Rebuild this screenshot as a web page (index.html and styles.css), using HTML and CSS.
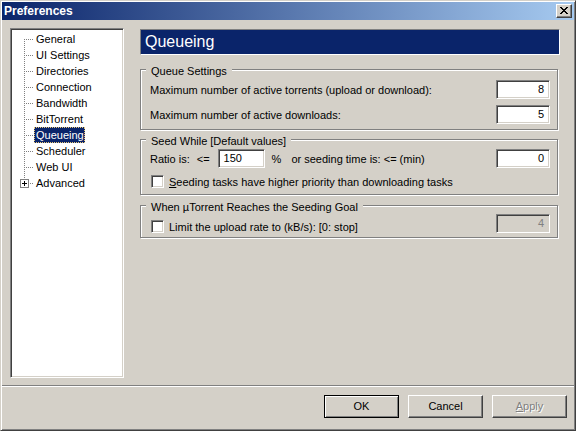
FILE: index.html
```html
<!DOCTYPE html>
<html>
<head>
<meta charset="utf-8">
<title>Preferences</title>
<link rel="stylesheet" href="styles.css">
</head>
<body>
<div class="window">
  <div class="titlebar">
    <span class="title">Preferences</span>
    <div class="close"><svg width="8" height="7" viewBox="0 0 8 7"><path fill="#000" d="M0 0h2v1H0z M6 0h2v1H6z M1 1h2v1H1z M5 1h2v1H5z M2 2h4v1H2z M3 3h2v1H3z M2 4h4v1H2z M1 5h2v1H1z M5 5h2v1H5z M0 6h2v1H0z M6 6h2v1H6z"/></svg></div>
  </div>
  <div class="body">
    <div class="tree">
      <ul class="tree-list">
        <li><span class="node">General</span></li>
        <li><span class="node">UI Settings</span></li>
        <li><span class="node">Directories</span></li>
        <li><span class="node">Connection</span></li>
        <li><span class="node">Bandwidth</span></li>
        <li><span class="node">BitTorrent</span></li>
        <li><span class="node selected">Queueing</span></li>
        <li><span class="node">Scheduler</span></li>
        <li><span class="node">Web UI</span></li>
        <li class="expandable"><span class="plus"></span><span class="node">Advanced</span></li>
      </ul>
    </div>
    <div class="panel">
      <div class="header">Queueing</div>
      <div class="group g1">
        <div class="legend"><span>Queue Settings</span></div>
        <div class="row r1">
          <span>Maximum number of active torrents (upload or download):</span>
          <div class="field">8</div>
        </div>
        <div class="row r2">
          <span>Maximum number of active downloads:</span>
          <div class="field">5</div>
        </div>
      </div>
      <div class="group g2">
        <div class="legend"><span>Seed While [Default values]</span></div>
        <div class="row r3">
          <span>Ratio is:</span>
          <span class="le">&lt;=</span>
          <div class="field field-left ratio">150</div>
          <span class="pct">%</span>
          <span class="or">or seeding time is: &lt;= (min)</span>
          <div class="field">0</div>
        </div>
        <div class="checkrow r4">
          <span class="check"></span>
          <span><u>S</u>eeding tasks have higher priority than downloading tasks</span>
        </div>
      </div>
      <div class="group g3">
        <div class="legend"><span>When µTorrent Reaches the Seeding Goal</span></div>
        <div class="row r5">
          <div class="checkrow inline">
            <span class="check"></span>
            <span>Limit the upload rate to (kB/s): [0: stop]</span>
          </div>
          <div class="field disabled">4</div>
        </div>
      </div>
    </div>
  </div>
  <div class="sep"></div>
  <div class="buttons">
    <div class="btn default">OK</div>
    <div class="btn">Cancel</div>
    <div class="btn disabled"><u>A</u>pply</div>
  </div>
</div>
</body>
</html>
```
FILE: styles.css
```css
* { box-sizing: border-box; }
html, body { margin: 0; padding: 0; }
body {
  font-family: "Liberation Sans", Arial, sans-serif;
  font-size: 11px;
  color: #000;
  background: #d4d0c8;
}
.window {
  width: 576px;
  height: 431px;
  background: #d4d0c8;
  border: 1px solid;
  border-color: #d4d0c8 #404040 #404040 #d4d0c8;
  box-shadow: inset 1px 1px #fff, inset -1px -1px #808080;
  padding: 1px;
  display: flex;
  flex-direction: column;
}
.titlebar {
  height: 18px;
  flex: none;
  display: flex;
  align-items: flex-start;
  background: linear-gradient(to right, #0a246a, #a6caf0);
  color: #fff;
}
.title {
  font-weight: bold;
  font-size: 12px;
  line-height: 19px;
  padding-left: 2px;
}
.close {
  margin-left: auto;
  margin-top: 2px;
  margin-right: 2px;
  width: 16px;
  height: 14px;
  background: #d4d0c8;
  border: 1px solid;
  border-color: #fff #404040 #404040 #fff;
  box-shadow: inset -1px -1px #808080;
  padding: 2px 0 0 3px;
  display: flex;
  align-items: flex-start;
}
.close svg { display: block; }
.body {
  flex: none;
  height: 365px;
  display: flex;
  padding: 8px 12px 0 8px;
}
.tree {
  width: 114px;
  height: 350px;
  flex: none;
  background: #fff;
  border: 1px solid;
  border-color: #808080 #fff #fff #808080;
  box-shadow: inset 1px 1px #404040, inset -1px -1px #d4d0c8;
  padding: 2px 1px 1px 1px;
}
.tree-list {
  list-style: none;
  margin: 0;
  padding: 0;
  position: relative;
}
.tree-list::before {
  content: "";
  position: absolute;
  left: 12px;
  top: 8px;
  width: 1px;
  height: 140px;
  background: repeating-linear-gradient(to bottom, #808080 0 1px, transparent 1px 2px);
}
.tree-list li {
  position: relative;
  height: 16px;
  line-height: 16px;
  padding-left: 22px;
  white-space: nowrap;
}
.tree-list li::before {
  content: "";
  position: absolute;
  left: 12px;
  top: 8px;
  width: 9px;
  height: 1px;
  background: repeating-linear-gradient(to right, #808080 0 1px, transparent 1px 2px);
}
.node {
  display: inline-block;
  padding: 1px 1px 0 2px;
  line-height: 15px;
  height: 16px;
}
.node.selected {
  background: #0a246a;
  color: #fff;
  outline: 1px dotted #e8c878;
  outline-offset: -1px;
}
.plus {
  position: absolute;
  left: 8px;
  top: 4px;
  width: 9px;
  height: 9px;
  border: 1px solid #808080;
  background:
    linear-gradient(#000, #000) center / 5px 1px no-repeat,
    linear-gradient(#000, #000) center / 1px 5px no-repeat,
    #fff;
  z-index: 1;
}
.panel {
  width: 420px;
  flex: none;
  margin-left: 16px;
  margin-top: 1px;
  display: flex;
  flex-direction: column;
}
.header {
  height: 26px;
  background: #0a246a;
  border: 1px solid;
  border-color: #808080 #fff #fff #808080;
  color: #fff;
  font-size: 16px;
  line-height: 24px;
  padding-left: 4px;
}
.group {
  width: 418px;
  border: 1px solid #808080;
  box-shadow: inset 1px 1px #fff, 1px 1px #fff;
  padding: 0 7px 5px 9px;
}
.legend {
  display: flex;
  margin-top: -5px;
  height: 13px;
  line-height: 13px;
}
.legend span {
  background: #d4d0c8;
  margin-left: -4px;
  padding: 0 5px;
}
.g1 { margin-top: 14px; }
.g2 { margin-top: 9px; padding-bottom: 6px; }
.g3 { margin-top: 10px; padding-bottom: 4px; }
.row {
  display: flex;
  align-items: center;
  height: 19px;
  white-space: nowrap;
}
.r1 { margin-top: 2px; }
.r2 { margin-top: 6px; }
.r3 { margin-top: 1px; }
.r5 { margin-top: 0; align-items: flex-end; }
.field {
  margin-left: auto;
  width: 54px;
  height: 19px;
  flex: none;
  background: #fff;
  border: 1px solid;
  border-color: #808080 #fff #fff #808080;
  box-shadow: inset 1px 1px #404040, inset -1px -1px #d4d0c8;
  padding: 0 5px;
  line-height: 17px;
  text-align: right;
}
.field-left { text-align: left; }
.field.disabled {
  background: #d4d0c8;
  color: #808080;
}
.le { margin-left: 7px; }
.ratio { margin-left: 8px; width: 47px; }
.pct { margin-left: 7px; }
.or { margin-left: 10px; }
.checkrow {
  display: flex;
  align-items: center;
  height: 13px;
  white-space: nowrap;
}
.r4 { margin-top: 7px; }
.check {
  width: 13px;
  height: 13px;
  flex: none;
  background: #fff;
  border: 1px solid;
  border-color: #808080 #fff #fff #808080;
  box-shadow: inset 1px 1px #404040, inset -1px -1px #d4d0c8;
  margin-left: 1px;
  margin-right: 5px;
}
.sep {
  flex: none;
  height: 2px;
  border-top: 1px solid #808080;
  border-bottom: 1px solid #fff;
}
.buttons {
  flex: none;
  display: flex;
  justify-content: flex-end;
  gap: 9px;
  padding: 8px 7px 0 0;
}
.btn {
  width: 75px;
  height: 23px;
  background: #d4d0c8;
  border: 1px solid;
  border-color: #fff #404040 #404040 #fff;
  box-shadow: inset -1px -1px #808080;
  text-align: center;
  line-height: 21px;
}
.btn.default {
  border-color: #000;
  box-shadow: inset 1px 1px #fff, inset -1px -1px #808080;
}
.btn.disabled {
  color: #808080;
  text-shadow: 1px 1px #fff;
}
```
